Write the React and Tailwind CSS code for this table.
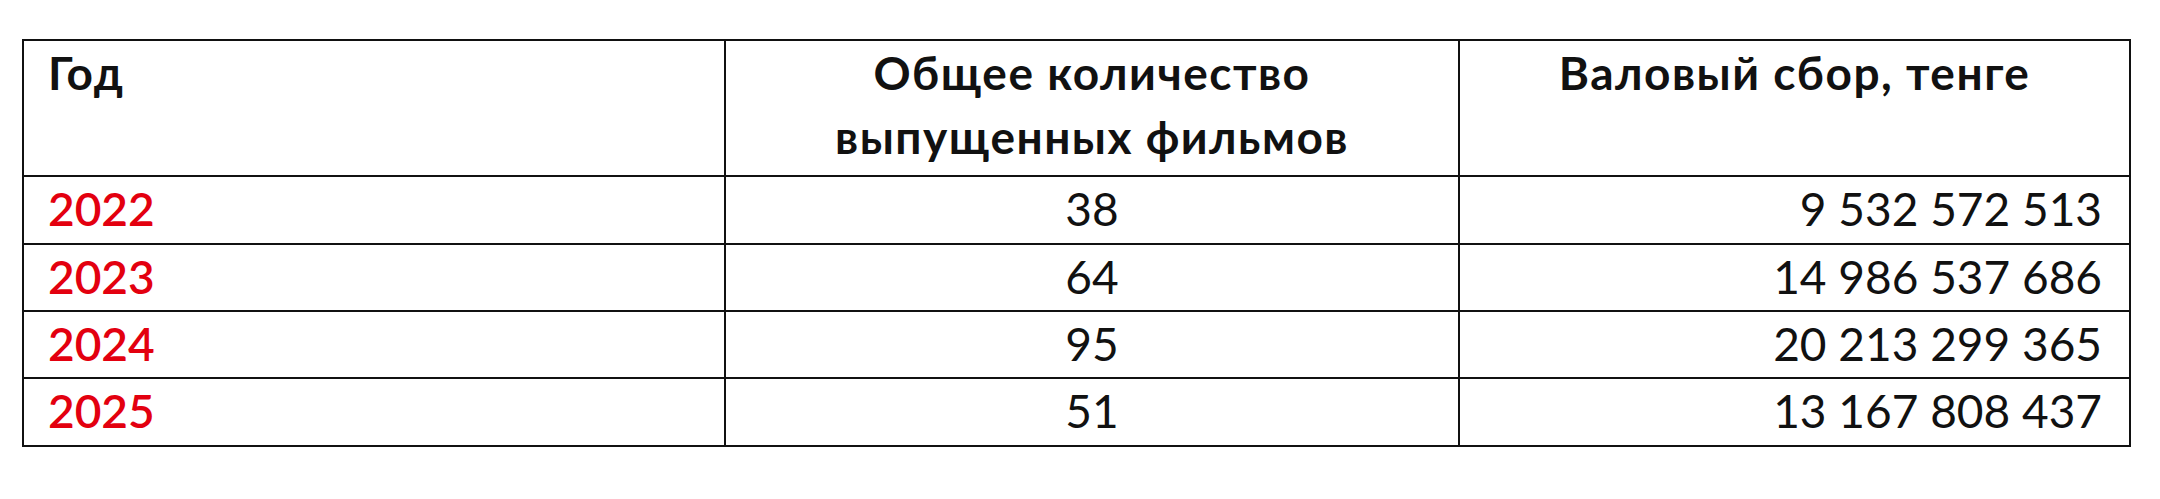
const rows = [
  { year: "2022", films: "38", gross: "9 532 572 513", h: "h-[68px]" },
  { year: "2023", films: "64", gross: "14 986 537 686", h: "h-[67px]" },
  { year: "2024", films: "95", gross: "20 213 299 365", h: "h-[67px]" },
  { year: "2025", films: "51", gross: "13 167 808 437", h: "h-[68px]" },
];

export default function App() {
  return (
    <div className="h-[499px] w-[2160px] bg-white pt-[39px] pl-[22px] font-['Lato','Open_Sans',sans-serif] text-[46px] leading-[64px] text-[#111]">
      <div className="w-[2109px] border-2 border-[#111]">
        {/* header */}
        <div className="grid h-[134px] grid-cols-[700px_734px_671px] font-bold tracking-[1.5px]">
          <div className="pl-6">Год</div>
          <div className="border-l-2 border-[#111] text-center">
            Общее количество
            <br />
            выпущенных фильмов
          </div>
          <div className="border-l-2 border-[#111] text-center">
            Валовый сбор, тенге
          </div>
        </div>
        {rows.map((row) => (
          <div
            key={row.year}
            className={`grid grid-cols-[700px_734px_671px] border-t-2 border-[#111] ${row.h}`}
          >
            <div className="pl-6 font-semibold text-[#e3000f]">{row.year}</div>
            <div className="border-l-2 border-[#111] text-center">{row.films}</div>
            <div className="border-l-2 border-[#111] pr-[27px] text-right">{row.gross}</div>
          </div>
        ))}
      </div>
    </div>
  );
}
